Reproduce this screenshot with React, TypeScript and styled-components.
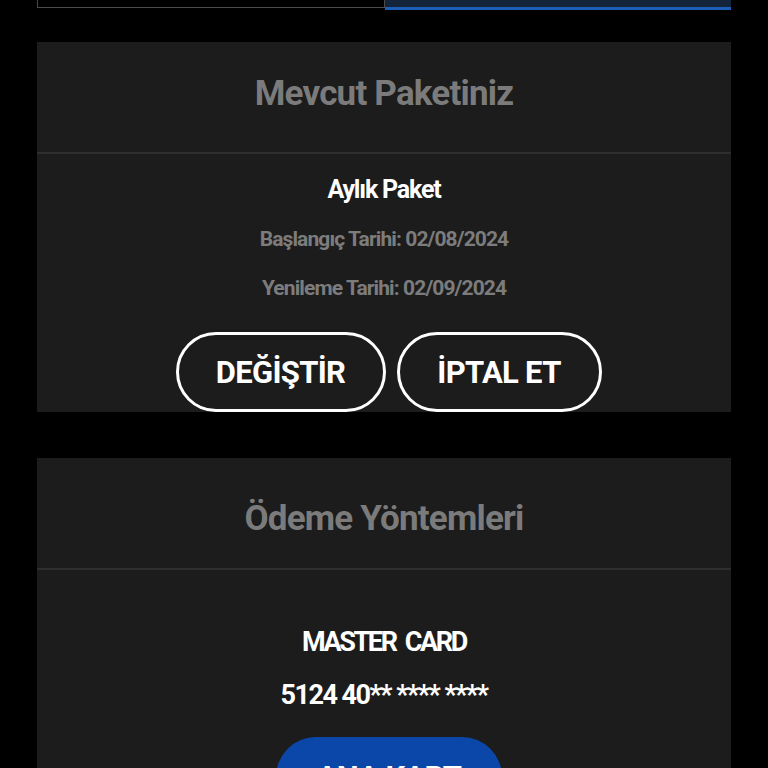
import styled, { createGlobalStyle } from 'styled-components';

const GlobalStyle = createGlobalStyle`
  html, body {
    margin: 0;
    padding: 0;
    background: #000;
  }
  body {
    font-family: Roboto, "Noto Sans", "Liberation Sans", sans-serif;
    color: #fff;
  }
`;

const plan = {
  name: 'Aylık Paket',
  start: '02/08/2024',
  renew: '02/09/2024',
};

function App() {
  return (
    <>
      <GlobalStyle />
      <Page>
        <TabRow>
          <Tab />
          <Tab $active />
        </TabRow>

        <Card>
          <CardHeader>
            <CardTitle>Mevcut Paketiniz</CardTitle>
          </CardHeader>
          <PackageBody>
            <PlanName>{plan.name}</PlanName>
            <DateLine>Başlangıç Tarihi: {plan.start}</DateLine>
            <DateLine>Yenileme Tarihi: {plan.renew}</DateLine>
            <ButtonRow>
              <OutlineButton $width={210}>DEĞİŞTİR</OutlineButton>
              <OutlineButton $width={205}>İPTAL ET</OutlineButton>
            </ButtonRow>
          </PackageBody>
        </Card>

        <Card>
          <CardHeader $lower>
            <CardTitle>Ödeme Yöntemleri</CardTitle>
          </CardHeader>
          <PaymentBody>
            <CardBrand>MASTER CARD</CardBrand>
            <CardNumber>5124 40** **** ****</CardNumber>
            <PrimaryButton>ANA KART</PrimaryButton>
          </PaymentBody>
        </Card>
      </Page>
    </>
  );
}

export default App;

const Page = styled.div`
  padding: 0 37px;
  height: 768px;
  overflow: hidden;
  display: flex;
  flex-direction: column;
`;

const TabRow = styled.div`
  display: flex;
  height: 9px;
  margin-bottom: 33px;
  flex-shrink: 0;
`;

const Tab = styled.div<{ $active?: boolean }>`
  flex: 1;
  box-sizing: border-box;
  background: ${(p) => (p.$active ? '#14253b' : '#000')};
  border: ${(p) => (p.$active ? 'none' : '1px solid #4a4a4a')};
  border-top: none;
  border-bottom: ${(p) => (p.$active ? '3px solid #1d5fb8' : '1px solid #4a4a4a')};
  height: ${(p) => (p.$active ? '10px' : '8px')};
`;

const Card = styled.section`
  background: #1c1c1c;
  margin-bottom: 46px;
  flex-shrink: 0;
`;

const CardHeader = styled.div<{ $lower?: boolean }>`
  height: 112px;
  display: flex;
  align-items: center;
  justify-content: center;
  padding: ${(p) => (p.$lower ? '10px 0 0' : '0 0 8px')};
  box-sizing: border-box;
  border-bottom: 2px solid #2e2e2e;
`;

const CardTitle = styled.h2`
  margin: 0;
  font-size: 35px;
  font-weight: 700;
  color: #7b7b7b;
  letter-spacing: -0.8px;
`;

const PackageBody = styled.div`
  display: flex;
  flex-direction: column;
  align-items: center;
  padding-top: 21px;
`;

const PlanName = styled.div`
  font-size: 25px;
  font-weight: 700;
  line-height: 30px;
  color: #fff;
  letter-spacing: -1.2px;
`;

const DateLine = styled.div`
  margin-top: 19px;
  font-size: 21px;
  font-weight: 700;
  line-height: 30px;
  color: #7c7c7c;
  letter-spacing: -0.9px;
`;

const ButtonRow = styled.div`
  display: flex;
  gap: 11px;
  margin-top: 29px;
  padding-left: 9px;
`;

const OutlineButton = styled.button<{ $width: number }>`
  width: ${(p) => p.$width}px;
  height: 80px;
  box-sizing: border-box;
  border: 3px solid #fff;
  border-radius: 40px;
  background: transparent;
  color: #fff;
  font-family: inherit;
  font-size: 31px;
  font-weight: 700;
  letter-spacing: -0.7px;
  cursor: pointer;
`;

const PaymentBody = styled.div`
  display: flex;
  flex-direction: column;
  align-items: center;
  padding-top: 57px;
  padding-bottom: 30px;
`;

const CardBrand = styled.div`
  font-size: 27px;
  font-weight: 700;
  line-height: 30px;
  letter-spacing: -2.4px;
  word-spacing: 5px;
`;

const CardNumber = styled.div`
  margin-top: 23px;
  font-size: 27px;
  font-weight: 700;
  line-height: 30px;
  letter-spacing: -1.5px;
`;

const PrimaryButton = styled.button`
  margin-top: 27px;
  margin-left: 10px;
  width: 226px;
  height: 80px;
  border: none;
  border-radius: 40px;
  background: #0a47a8;
  color: #fff;
  font-family: inherit;
  font-size: 31px;
  font-weight: 700;
  letter-spacing: -0.7px;
  cursor: pointer;
`;
